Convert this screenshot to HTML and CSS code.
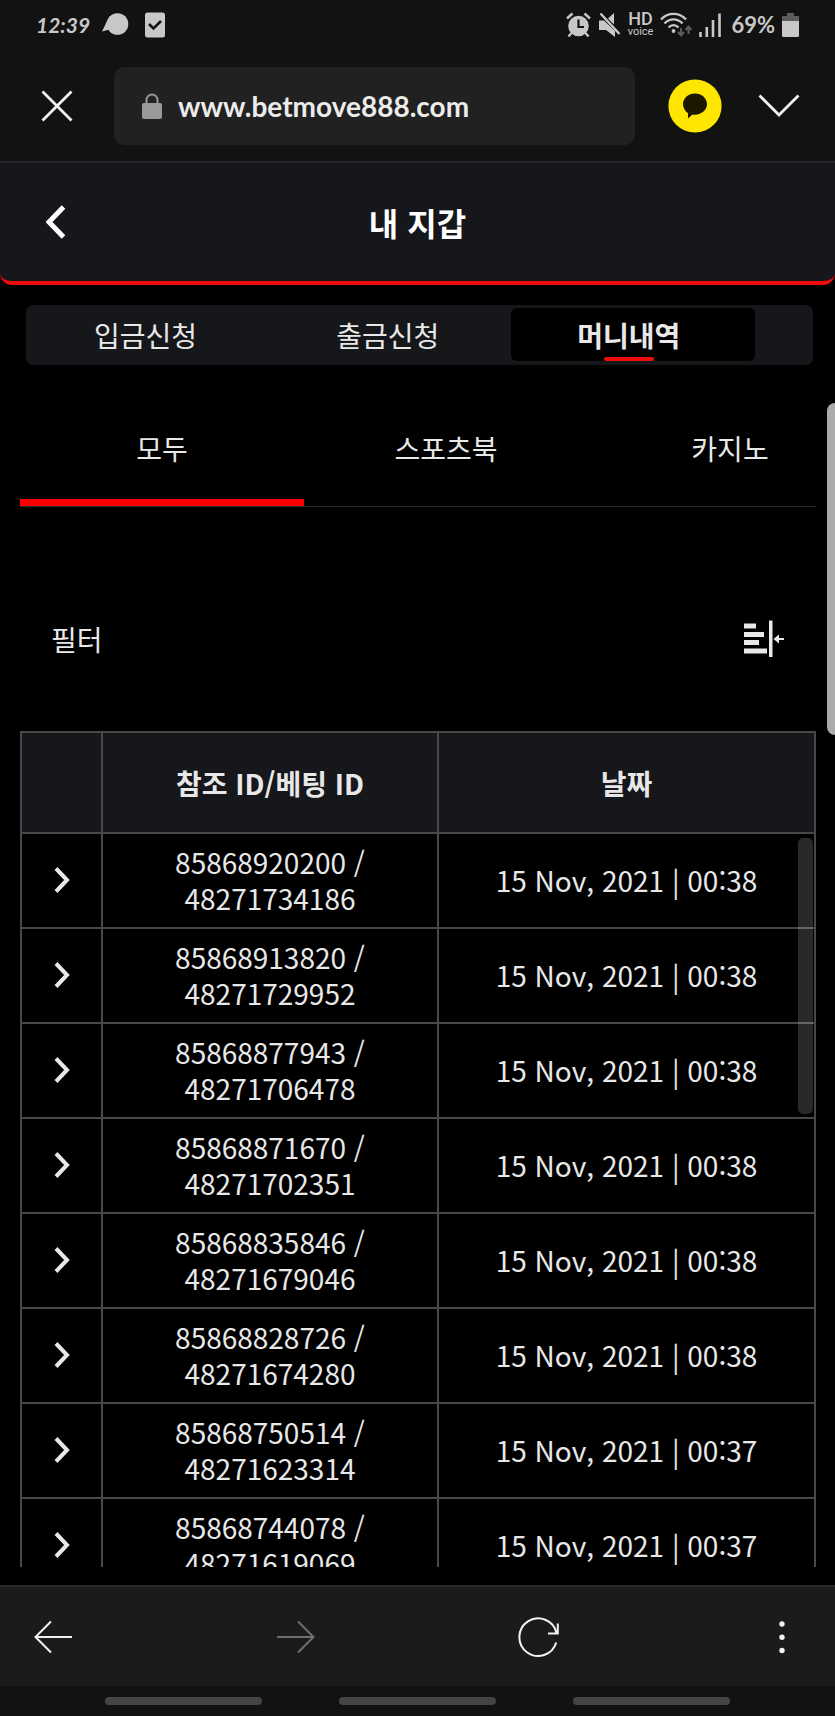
FILE: index.html
```html
<!DOCTYPE html>
<html lang="ko">
<head>
    <meta charset="UTF-8">
    <meta name="viewport" content="width=device-width, initial-scale=1.0">
    <title>내 지갑</title>
    <link rel="stylesheet" href="styles.css">
</head>
<body>

<!-- Status bar -->
<div class="status-bar">
    <div class="status-left">
        <span class="clock">12:39</span>
        <svg width="27" height="24" viewBox="0 0 27 24" fill="currentColor"><circle cx="15.500" cy="11" r="10.800"/><path d="M5 8 0 18.500l9-2.500z"/></svg>
        <svg class="task-icon" width="20" height="26" viewBox="0 0 20 26"><rect width="20" height="25" y="0.500" rx="2.500" fill="currentColor"/><path d="M4 12l4.500 4.500L16 9" fill="none" stroke="#121212" stroke-width="2.600"/></svg>
    </div>
    <div class="status-right">
        <svg width="25" height="26" viewBox="0 0 25 26" fill="currentColor"><circle cx="12.500" cy="14" r="10.300"/><path d="M1 6.500 6.500 1.500M24 6.500 18.500 1.500M5.500 21 2.500 24.500M19.500 21l3 3.500" stroke="currentColor" stroke-width="2.400"/><path d="M12.500 7.500V15H18" fill="none" stroke="#121212" stroke-width="2.200"/></svg>
        <svg width="23" height="26" viewBox="0 0 23 26" fill="currentColor"><path d="M1 8.500h5l11 10.500v6L8 18H1zM10 6.500 16 1v11.500z"/><path d="M2.500 1.500 21.500 22" stroke="currentColor" stroke-width="2.400"/></svg>
        <span class="hd"><b>HD</b><small>voice</small></span>
        <svg class="wifi-icon" width="32" height="26" viewBox="0 0 32 26" fill="none" stroke="currentColor" stroke-width="2.300"><path d="M1 7.500C8 0 19 0 26 7.500M4.500 11.500c5-5.500 13-5.500 18 0M8.500 15.500c3-3 7-3 10 0"/><circle cx="13.500" cy="19" r="1.900" fill="currentColor" stroke="none"/><path d="M21 16v7M18 20l3 3.500 3-3.500M28.500 22v-7M25.500 18l3-3.500 3 3.500" stroke="#5c5c5c" stroke-width="2"/></svg>
        <svg width="22" height="26" viewBox="0 0 22 26" stroke="currentColor" stroke-width="2.600"><path d="M1.500 20v5M7.800 15v10M14 8v17M20.500 1.500V25"/></svg>
        <span class="percent">69%</span>
        <svg width="17" height="26" viewBox="0 0 17 26"><path d="M5 1h7v3h5v7H0V4h5z" fill="#5c5c5c"/><path d="M0 9h17v14.500q0 1.500-1.500 1.500h-14Q0 25 0 23.500z" fill="currentColor"/></svg>
    </div>
</div>

<!-- Browser toolbar -->
<div class="toolbar">
    <button class="close-button" aria-label="닫기">
        <svg width="32" height="32" viewBox="0 0 32 32"><path d="M1.500 1.500l29 29M30.500 1.500l-29 29" stroke="currentColor" stroke-width="2.800"/></svg>
    </button>
    <label class="address">
        <svg width="20" height="26" viewBox="0 0 20 26"><path d="M4.500 12V7a5.500 5.500 0 0 1 11 0v5" fill="none" stroke="#999" stroke-width="2"/><rect y="10" width="20" height="16" rx="2" fill="#999"/></svg>
        <input type="text" aria-label="주소" value="www.betmove888.com">
    </label>
    <button class="talk-button" aria-label="카카오톡">
        <svg width="54" height="54" viewBox="0 0 54 54"><circle cx="27" cy="27" r="26.600" fill="#ffe600"/><path d="M27 14.500c6.600 0 12 4.700 12 10.600s-5.400 10.600-12 10.600q-1.400 0-2.500-.2L20 39.500v-5.200c-3-1.900-5-5.300-5-9.200 0-5.900 5.400-10.600 12-10.600z" fill="#1c1900"/></svg>
    </button>
    <button class="more-button" aria-label="펼치기">
        <svg width="42" height="24" viewBox="0 0 42 24"><path d="M1.500 1.500 21 21 40.500 1.500" fill="none" stroke="currentColor" stroke-width="2.800"/></svg>
    </button>
</div>

<!-- Page header -->
<header class="page-header">
    <button class="back-button" aria-label="뒤로">
        <svg width="20" height="34" viewBox="0 0 20 34"><path d="M17.500 2 3 17l14.500 15" fill="none" stroke="currentColor" stroke-width="5"/></svg>
    </button>
    <h1>내 지갑</h1>
</header>

<main>
    <nav class="wallet-nav">
        <a href="#deposit">입금신청</a>
        <a href="#withdraw">출금신청</a>
        <a href="#history" class="active">머니내역</a>
    </nav>

    <nav class="category-tabs">
        <a href="#all" class="active">모두</a>
        <a href="#sports">스포츠북</a>
        <a href="#casino">카지노</a>
    </nav>

    <div class="filter-row">
        <span>필터</span>
        <button aria-label="필터 열기">
            <svg width="40" height="38" viewBox="0 0 40 38" fill="currentColor"><path d="M0 3.500h12v5H0zM0 12h20v5H0zM0 20h15v5H0zM0 28.500h23v5H0zM25 .500h3.500v36.500H25zM29.500 19l5.500-4.500v3.500h5v2h-5v3.500z"/></svg>
        </button>
    </div>

    <div class="table-wrap">
        <table>
            <colgroup>
                <col class="col-toggle">
                <col class="col-id">
                <col>
            </colgroup>
            <thead>
                <tr><th></th><th>참조 ID/베팅 ID</th><th>날짜</th></tr>
            </thead>
            <tbody id="history"></tbody>
        </table>
        <div class="scroll-thumb"></div>
    </div>
</main>

<div class="edge-handle"></div>

<!-- Browser navigation -->
<nav class="bottom-bar">
    <button aria-label="이전 페이지">
        <svg width="40" height="34" viewBox="0 0 40 34" fill="none" stroke="currentColor" stroke-width="2"><path d="M18 1.500 2.500 17 18 32.500M2.500 17H39"/></svg>
    </button>
    <button aria-label="다음 페이지" disabled>
        <svg width="40" height="34" viewBox="0 0 40 34" fill="none" stroke="currentColor" stroke-width="2"><path d="M22 1.500 37.500 17 22 32.500M37.500 17H1"/></svg>
    </button>
    <button aria-label="새로고침">
        <svg width="42" height="42" viewBox="0 0 42 42" fill="none" stroke="currentColor" stroke-width="2"><path d="M38.200 26.500A18.800 18.800 0 1 1 38.500 17M39.800 7.500v10H30"/></svg>
    </button>
    <button aria-label="메뉴">
        <svg width="6" height="34" viewBox="0 0 6 34" fill="currentColor"><circle cx="3" cy="4" r="2.700"/><circle cx="3" cy="17.300" r="2.700"/><circle cx="3" cy="30.500" r="2.700"/></svg>
    </button>
</nav>
<div class="gesture-bar"><span></span><span></span><span></span></div>

<script>
    const rows = [
        ['85868920200', '48271734186', '00:38'],
        ['85868913820', '48271729952', '00:38'],
        ['85868877943', '48271706478', '00:38'],
        ['85868871670', '48271702351', '00:38'],
        ['85868835846', '48271679046', '00:38'],
        ['85868828726', '48271674280', '00:38'],
        ['85868750514', '48271623314', '00:37'],
        ['85868744078', '48271619069', '00:37']
    ];

    document.getElementById('history').innerHTML = rows.map(([refId, betId, time]) => `
        <tr>
            <td><button aria-label="${refId} 상세"><svg width="16" height="26" viewBox="0 0 16 26"><path d="M2 1.500 13 13 2 24.500" fill="none" stroke="currentColor" stroke-width="4"/></svg></button></td>
            <td>${refId} /<br>${betId}</td>
            <td>15 Nov, 2021 | ${time}</td>
        </tr>`).join('');
</script>

</body>
</html>
```

FILE: styles.css
```css
* {
    box-sizing: border-box;
}
body {
    margin: 0;
    height: 100vh;
    display: flex;
    flex-direction: column;
    overflow: hidden;
    background-color: #000;
    color: #e8e8e8;
    font-family: "Noto Sans CJK KR", sans-serif;
    font-size: 28px;
    line-height: 36px;
}
button {
    display: flex;
    justify-content: center;
    align-items: center;
    padding: 0;
    border: none;
    background: none;
    color: inherit;
    cursor: pointer;
}
a {
    color: inherit;
    text-decoration: none;
}
svg {
    display: block;
    flex: none;
}

/* Status bar */
.status-bar {
    display: flex;
    justify-content: space-between;
    align-items: center;
    height: 50px;
    padding: 0 36px;
    background-color: #121212;
    color: #c8c8c8;
    font-family: Lato, sans-serif;
    font-size: 22px;
    font-weight: bold;
}
.status-left,
.status-right {
    display: flex;
    align-items: center;
}
.status-left {
    gap: 12px;
}
.status-right {
    gap: 7px;
}
.clock {
    font-style: italic;
    font-size: 21px;
}
.task-icon {
    margin-left: 4px;
}
.hd {
    display: flex;
    flex-direction: column;
    align-items: center;
    font-family: Roboto, sans-serif;
}
.hd b {
    font-size: 18px;
    font-weight: 500;
    line-height: 14px;
}
.hd small {
    font-size: 11px;
    font-weight: 400;
    line-height: 12px;
}
.percent {
    margin-left: 3px;
}

/* Browser toolbar */
.toolbar {
    display: flex;
    align-items: center;
    height: 111px;
    padding-right: 12px;
    background-color: #121212;
    color: #f2f2f2;
}
.close-button {
    width: 114px;
}
.address {
    flex: 1;
    display: flex;
    align-items: center;
    gap: 16px;
    height: 78px;
    padding: 0 28px;
    margin-right: 20px;
    border-radius: 10px;
    background-color: #212121;
}
.address input {
    flex: 1;
    min-width: 0;
    padding: 0;
    border: none;
    outline: none;
    background: none;
    color: #ececec;
    font-family: Lato, sans-serif;
    font-size: 28px;
    font-weight: bold;
}
.talk-button {
    width: 80px;
}
.more-button {
    width: 88px;
}

/* Page header */
.page-header {
    display: grid;
    grid-template-columns: 112px 1fr 112px;
    align-items: center;
    height: 124px;
    border-top: 2px solid #222428;
    border-bottom: 4px solid #ee0b0b;
    border-radius: 0 0 12px 12px;
    background-color: #16171b;
    color: #fff;
}
.page-header h1 {
    margin: 0;
    font-size: 32px;
    text-align: center;
}

main {
    flex: 1;
    min-height: 0;
    display: flex;
    flex-direction: column;
    padding: 20px 19px 18px 20px;
}
.wallet-nav {
    display: grid;
    grid-template-columns: 4fr 4fr 4fr 1fr;
    height: 60px;
    margin: 0 3px 0 6px;
    padding: 3px 0 4px;
    border-radius: 7px;
    background-color: #16171b;
}
.wallet-nav a {
    display: flex;
    justify-content: center;
    align-items: center;
    padding-right: 3px;
}
.wallet-nav .active {
    position: relative;
    margin: 0 -3px 0 1px;
    padding-right: 9px;
    border-radius: 6px;
    background-color: #000;
    font-weight: bold;
}
.wallet-nav .active::after {
    content: "";
    position: absolute;
    bottom: 0;
    width: 50px;
    height: 4px;
    border-radius: 2px;
    background-color: #ee0b0b;
}

.category-tabs {
    display: flex;
    margin-top: 27px;
    overflow: hidden;
    border-bottom: 1px solid #2c2c2e;
}
.category-tabs a {
    flex: 0 0 284px;
    padding: 38px 0 33px;
    border-bottom: 7px solid transparent;
    text-align: center;
}
.category-tabs .active {
    border-bottom-color: #fa0000;
}

.filter-row {
    display: flex;
    justify-content: space-between;
    align-items: center;
    height: 224px;
    padding: 40px 32px 0 31px;
}

/* History table */
.table-wrap {
    position: relative;
    flex: 1;
    min-height: 0;
    overflow: hidden;
}
table {
    width: 100%;
    table-layout: fixed;
    border-collapse: collapse;
}
.col-toggle {
    width: 81px;
}
.col-id {
    width: 336px;
}
th,
td {
    border: 2px solid #48484b;
    text-align: center;
}
th {
    height: 101px;
    padding: 0;
    background-color: #16171b;
}
td {
    height: 95px;
    padding: 9px 0 11px;
}
td button {
    width: 100%;
}
.scroll-thumb {
    position: absolute;
    top: 107px;
    right: 3px;
    width: 15px;
    height: 276px;
    border-radius: 5px;
    background-color: rgba(255, 255, 255, 0.16);
}

/* System edge panel handle */
.edge-handle {
    position: absolute;
    top: 403px;
    right: 0;
    width: 8px;
    height: 332px;
    border-radius: 8px 0 0 8px;
    background-color: #ababab;
}

/* Browser navigation */
.bottom-bar {
    display: flex;
    justify-content: space-between;
    height: 101px;
    padding: 0 11px;
    border-top: 2px solid #2a2a2a;
    background-color: #1b1b1b;
    color: #f2f2f2;
}
.bottom-bar button {
    width: 84px;
}
.bottom-bar button:disabled {
    color: #6e6e6e;
}
.gesture-bar {
    display: flex;
    justify-content: space-between;
    align-items: center;
    height: 30px;
    padding: 0 105px;
    background-color: #121212;
}
.gesture-bar span {
    width: 157px;
    height: 8px;
    border-radius: 4px;
    background-color: #444;
}
```
